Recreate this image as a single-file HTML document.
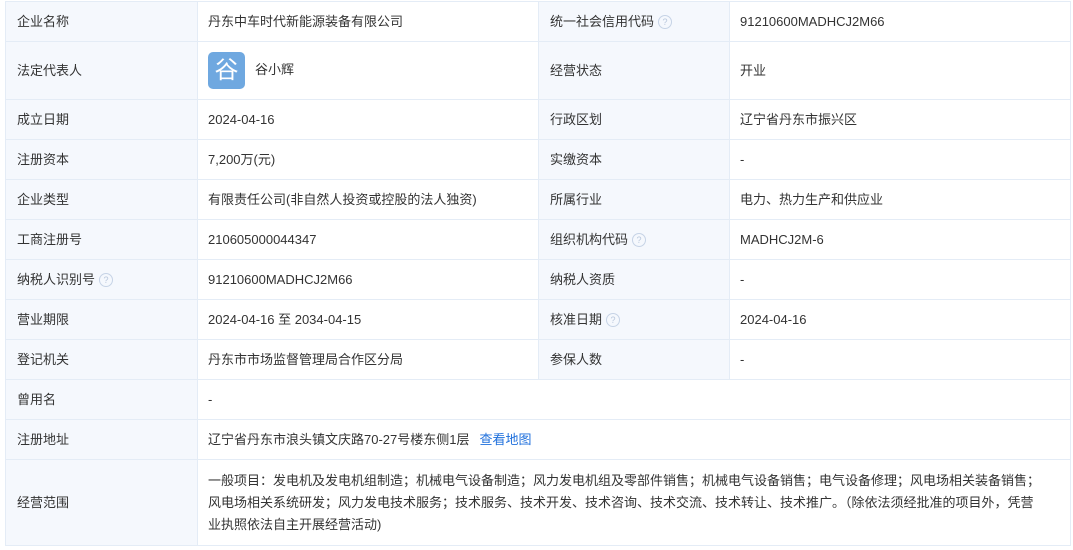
<!DOCTYPE html>
<html><head><meta charset="utf-8"><style>
body{margin:0;background:#fff;font-family:"Liberation Sans","Noto Sans CJK SC",sans-serif;font-size:13px;color:#333;}
table{position:absolute;left:5px;top:1px;border-collapse:collapse;width:1065px;table-layout:fixed;}
td{border:1px solid #e4ecf6;padding:0 10px;height:39px;vertical-align:middle;line-height:22px;}
td.l{background:#f5f8fd;padding-left:11px}
.q{display:inline-block;width:12px;height:12px;border:1px solid #c6d3e6;border-radius:50%;color:#b8c7dc;font-size:9px;line-height:12px;text-align:center;vertical-align:middle;margin-left:4px;box-sizing:content-box}
.av{display:inline-block;width:37px;height:37px;border-radius:5px;background:#6fa8e0;color:#fff;font-size:24px;line-height:37px;text-align:center;vertical-align:middle;margin-right:10px}
a{color:#1e6fdc;text-decoration:none;margin-left:10px}
</style></head><body>
<table>
<colgroup><col style="width:192px"><col style="width:341px"><col style="width:191px"><col style="width:341px"></colgroup>
<tr><td class="l" style="height:38px">企业名称</td><td>丹东中车时代新能源装备有限公司</td><td class="l">统一社会信用代码<span class="q">?</span></td><td>91210600MADHCJ2M66</td></tr>
<tr><td class="l" style="height:57px">法定代表人</td><td><span class="av">谷</span>谷小辉</td><td class="l">经营状态</td><td>开业</td></tr>
<tr><td class="l">成立日期</td><td>2024-04-16</td><td class="l">行政区划</td><td>辽宁省丹东市振兴区</td></tr>
<tr><td class="l">注册资本</td><td>7,200万(元)</td><td class="l">实缴资本</td><td>-</td></tr>
<tr><td class="l">企业类型</td><td>有限责任公司(非自然人投资或控股的法人独资)</td><td class="l">所属行业</td><td>电力、热力生产和供应业</td></tr>
<tr><td class="l">工商注册号</td><td>210605000044347</td><td class="l">组织机构代码<span class="q">?</span></td><td>MADHCJ2M-6</td></tr>
<tr><td class="l">纳税人识别号<span class="q">?</span></td><td>91210600MADHCJ2M66</td><td class="l">纳税人资质</td><td>-</td></tr>
<tr><td class="l">营业期限</td><td>2024-04-16 至 2034-04-15</td><td class="l">核准日期<span class="q">?</span></td><td>2024-04-16</td></tr>
<tr><td class="l">登记机关</td><td>丹东市市场监督管理局合作区分局</td><td class="l">参保人数</td><td>-</td></tr>
<tr><td class="l">曾用名</td><td colspan="3">-</td></tr>
<tr><td class="l">注册地址</td><td colspan="3">辽宁省丹东市浪头镇文庆路70-27号楼东侧1层<a>查看地图</a></td></tr>
<tr><td class="l" style="height:85px">经营范围</td><td colspan="3" style="line-height:22px;white-space:nowrap">一般项目：发电机及发电机组制造；机械电气设备制造；风力发电机组及零部件销售；机械电气设备销售；电气设备修理；风电场相关装备销售；<br>风电场相关系统研发；风力发电技术服务；技术服务、技术开发、技术咨询、技术交流、技术转让、技术推广。（除依法须经批准的项目外，凭营<br>业执照依法自主开展经营活动)</td></tr>
</table>
</body></html>
